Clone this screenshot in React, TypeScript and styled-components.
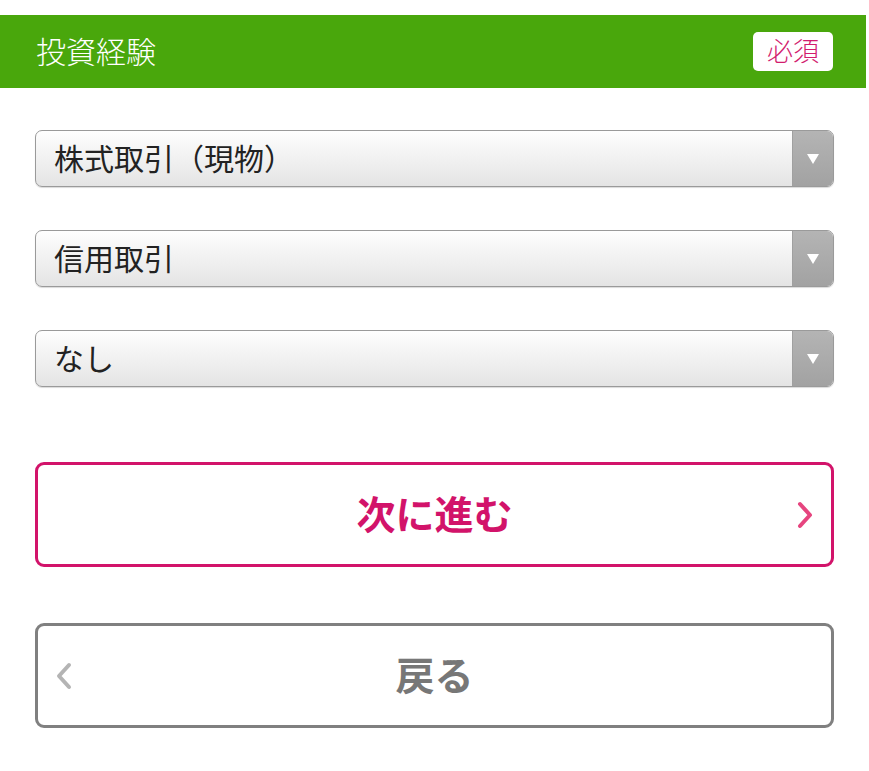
import React from "react";
import styled, { createGlobalStyle } from "styled-components";

const Global = createGlobalStyle`
  html, body { margin: 0; padding: 0; background: #fff; }
  body { font-family: "Noto Sans CJK JP", "Noto Sans", sans-serif; }
`;

const Page = styled.div`
  width: 869px;
  padding-top: 15px;
  display: flex;
  flex-direction: column;
`;

const Header = styled.div`
  height: 73px;
  background: #49a70c;
  display: flex;
  align-items: center;
  justify-content: space-between;
  padding: 0 36px 0 36px;
  margin-right: 3px;
`;

const Title = styled.h1`
  margin: 0 0 3px 0;
  font-size: 30px;
  font-weight: 300;
  color: #fff;
  letter-spacing: 0;
`;

const Badge = styled.span`
  background: #fff;
  color: #d21c6e;
  font-size: 26px;
  font-weight: 300;
  border-radius: 5px;
  padding: 0 14px 3px;
  height: 36px;
  line-height: 36px;
  margin-right: -3px;
  margin-bottom: 1px;
`;

const Body = styled.div`
  padding: 42px 35px 0 35px;
  display: flex;
  flex-direction: column;
`;

const Selects = styled.div`
  display: flex;
  flex-direction: column;
  gap: 43px;
`;

const Select = styled.div`
  height: 57px;
  box-sizing: border-box;
  border: 1.5px solid #9a9a9a;
  border-radius: 7px;
  display: flex;
  overflow: hidden;
  background: linear-gradient(#fefefe, #e4e4e4);
  box-shadow: 0 1px 1px rgba(0,0,0,0.15);
`;

const SelectText = styled.div`
  flex: 1;
  display: flex;
  align-items: center;
  padding: 0 0 4px 18px;
  font-size: 30px;
  color: #222;
`;

const Arrow = styled.div`
  width: 40px;
  background: linear-gradient(#b4b4b4, #a2a2a2);
  border-left: 1px solid #a0a0a0;
  display: flex;
  align-items: center;
  justify-content: center;
`;

const Button = styled.button<{ $tone: "primary" | "secondary" }>`
  height: 105px;
  box-sizing: border-box;
  border: 3.5px solid ${(p) => (p.$tone === "primary" ? "#d2136a" : "#808080")};
  border-radius: 9px;
  background: #fff;
  display: flex;
  align-items: center;
  justify-content: center;
  position: relative;
  font-family: inherit;
  font-size: 39px;
  font-weight: 700;
  color: ${(p) => (p.$tone === "primary" ? "#d2136a" : "#777")};
  padding: 0 0 6px 0;
`;

const NextButton = styled(Button)`
  margin-top: 75px;
`;

const BackButton = styled(Button)`
  margin-top: 56px;
`;

const Chevron = styled.svg<{ $side: "left" | "right" }>`
  position: absolute;
  top: 50%;
  transform: translateY(-50%);
  ${(p) => (p.$side === "right" ? "right: 18px;" : "left: 18px;")}
`;

const Tri = () => (
  <svg width="14" height="12" viewBox="0 0 14 12">
    <path d="M1 1 L13 1 L7 11 Z" fill="#fff" />
  </svg>
);

const options = ["株式取引（現物）", "信用取引", "なし"];

export default function App() {
  return (
    <>
      <Global />
      <Page>
        <Header>
          <Title>投資経験</Title>
          <Badge>必須</Badge>
        </Header>
        <Body>
          <Selects>
            {options.map((o) => (
              <Select key={o}>
                <SelectText>{o}</SelectText>
                <Arrow>
                  <Tri />
                </Arrow>
              </Select>
            ))}
          </Selects>
          <NextButton $tone="primary">
            次に進む
            <Chevron $side="right" width="16" height="28" viewBox="0 0 16 28">
              <path d="M3 3 L13 14 L3 25" fill="none" stroke="#e6457f" strokeWidth="4" strokeLinecap="round" strokeLinejoin="round" />
            </Chevron>
          </NextButton>
          <BackButton $tone="secondary">
            戻る
            <Chevron $side="left" width="16" height="28" viewBox="0 0 16 28">
              <path d="M13 3 L3 14 L13 25" fill="none" stroke="#b4b4b4" strokeWidth="4" strokeLinecap="round" strokeLinejoin="round" />
            </Chevron>
          </BackButton>
        </Body>
      </Page>
    </>
  );
}
